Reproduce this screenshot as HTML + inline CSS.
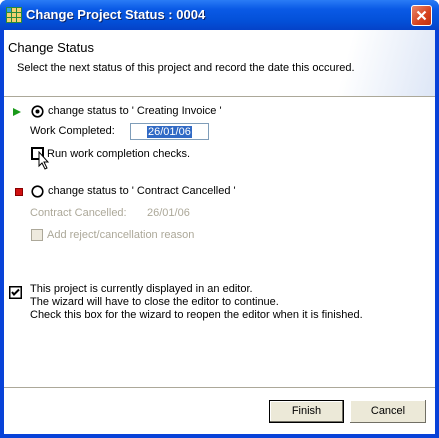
<!DOCTYPE html>
<html><head><style>
body{margin:0;width:439px;height:438px;overflow:hidden;font-family:"Liberation Sans",sans-serif;font-size:11px;color:#000}
.win{position:absolute;left:0;top:0;width:439px;height:438px;background:#0842d8;border-radius:7px 7px 0 0;overflow:hidden}
.tb{position:absolute;left:0;top:0;width:439px;height:30px;background:linear-gradient(#2a7cf6,#0a5ae6 30%,#0350d8 70%,#0442c8)}
.body{position:absolute;left:4px;top:30px;width:431px;height:404px;background:#fff}
.a{position:absolute;white-space:nowrap}
.g{color:#aca899}
</style></head><body>
<div class="win">
<div class="tb"></div>
<svg class="a" style="left:6px;top:7px" width="16" height="16"><rect x="0" y="0" width="16" height="16" fill="#f4d070"/><g stroke="#2a8a3a" stroke-width="1"><path d="M0.5 0v16M5.5 0v16M10.5 0v16M15.5 0v16M0 0.5h16M0 5.5h16M0 10.5h16M0 15.5h16"/></g><rect x="1" y="1" width="4" height="4" fill="#33a0e0"/></svg>
<div class="a" style="left:26px;top:7px;color:#fff;font-weight:bold;font-size:13px;text-shadow:1px 1px #0a246a">Change Project Status : 0004</div>
<div class="a" style="left:411px;top:5px;width:21px;height:21px;border:1px solid #fff;border-radius:3px;background:linear-gradient(135deg,#e8856a,#d5421e 60%,#c03010);box-sizing:border-box"><svg width="19" height="19"><path d="M5.5 5.5l8 8M13.5 5.5l-8 8" stroke="#fff" stroke-width="2.2"/></svg></div>
<div class="body">
<div class="a" style="left:0;top:0;width:431px;height:66px;background:linear-gradient(105deg,#fff 78%,#dde6f6)"></div>
<div class="a" style="left:0;top:66px;width:431px;height:1px;background:#aca899"></div>
<div class="a" style="left:4px;top:10px;font-size:13px">Change Status</div>
<div class="a" style="left:13px;top:32px">Select the next status of this project and record the date this occured.</div>
<svg class="a" style="left:9px;top:78px" width="8" height="8"><path d="M0 0L8 4L0 8Z" fill="#1a9a1a"/></svg>
<svg class="a" style="left:27px;top:75px" width="13" height="13"><circle cx="6.5" cy="6.5" r="5.3" fill="#fff" stroke="#000" stroke-width="1.6"/><circle cx="6.5" cy="6.5" r="2" fill="#000"/></svg>
<div class="a" style="left:44px;top:75px">change status to ' Creating Invoice '</div>
<div class="a" style="left:26px;top:95px">Work Completed:</div>
<div class="a" style="left:126px;top:93px;width:79px;height:17px;border:1px solid #7f9db9;box-sizing:border-box"></div>
<div class="a" style="left:143px;top:96px;background:#316ac5;color:#fff;padding:0 1px;line-height:12px">26/01/06</div>
<div class="a" style="left:27px;top:117px;width:13px;height:13px;border:2px solid #000;box-sizing:border-box"></div>
<div class="a" style="left:43px;top:118px">Run work completion checks.</div>
<svg class="a" style="left:34px;top:121px" width="14" height="20"><path d="M1 1v14l3-3 3 6 2-1-3-6h4z" fill="#fff" stroke="#000"/></svg>
<div class="a" style="left:11px;top:158px;width:6px;height:6px;background:#d01010;border:1px solid #800"></div>
<svg class="a" style="left:27px;top:155px" width="13" height="13"><circle cx="6.5" cy="6.5" r="5.3" fill="#fff" stroke="#000" stroke-width="1.6"/></svg>
<div class="a" style="left:44px;top:155px">change status to ' Contract Cancelled '</div>
<div class="a g" style="left:26px;top:177px">Contract Cancelled:</div>
<div class="a g" style="left:143px;top:177px">26/01/06</div>
<div class="a" style="left:27px;top:199px;width:12px;height:12px;border:1px solid #aca899;background:#eeeade;box-sizing:border-box"></div>
<div class="a g" style="left:43px;top:199px">Add reject/cancellation reason</div>
<svg class="a" style="left:5px;top:256px" width="13" height="13"><rect x="0.5" y="0.5" width="12" height="12" fill="#fff" stroke="#000"/><rect x="1" y="1" width="11" height="11" fill="none" stroke="#000"/><path d="M3 6l2 2.5L10 3.5" stroke="#000" stroke-width="2" fill="none"/></svg>
<div class="a" style="left:26px;top:253px;line-height:13px">This project is currently displayed in an editor.<br>The wizard will have to close the editor to continue.<br>Check this box for the wizard to reopen the editor when it is finished.</div>
<div class="a" style="left:0;top:357px;width:431px;height:1px;background:#aca899"></div>
<div class="a" style="left:265px;top:370px;width:75px;height:23px;border:1px solid #000;box-sizing:border-box;background:#ece9d8;box-shadow:inset -1px -1px #716f64,inset 1px 1px #fff;text-align:center;line-height:21px">Finish</div>
<div class="a" style="left:346px;top:370px;width:76px;height:23px;box-sizing:border-box;background:#ece9d8;box-shadow:inset -1px -1px #716f64,inset 1px 1px #fff;text-align:center;line-height:23px">Cancel</div>
</div>
</div>
</body></html>
